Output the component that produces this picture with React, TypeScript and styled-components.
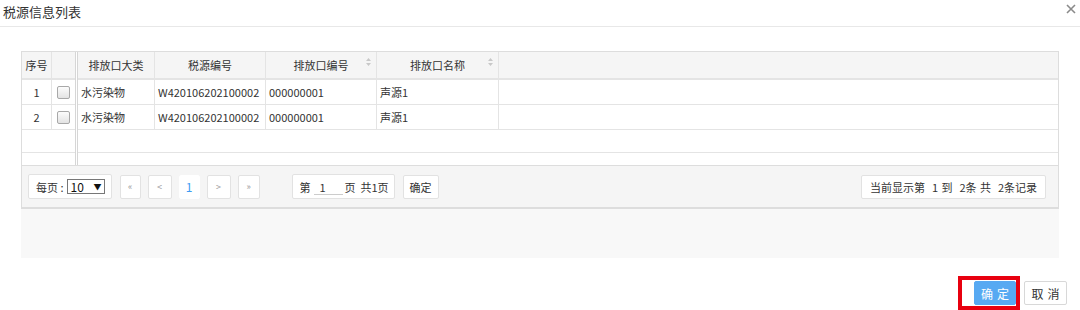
import styled, { createGlobalStyle } from 'styled-components'

const GlobalStyle = createGlobalStyle`
  body {
    margin: 0;
    background: #fff;
    font-family: "Noto Sans CJK SC", "Noto Sans", sans-serif;
    font-size: 11px;
    color: #333;
  }
`

const Dialog = styled.div`
  width: 1080px;
  height: 310px;
  position: relative;
  overflow: hidden;
`

const TitleBar = styled.div`
  height: 27px;
  border-bottom: 1px solid #e8e8e8;
  display: flex;
  align-items: center;
  justify-content: space-between;
  padding: 0 4px 3px 3px;
  box-sizing: border-box;
`

const Title = styled.div`
  font-size: 13px;
  color: #333;
`

const CloseBtn = styled.svg`
  width: 10px;
  height: 10px;
  margin-top: -6px;
  cursor: pointer;
`

const Content = styled.div`
  padding: 24px 21px 0;
`

const GridBox = styled.div`
  border: 1px solid #ddd;
  border-bottom: 2px solid #ddd;
  background: #fff;
`

const GridBody = styled.div`
  display: flex;
  height: 113px;
`

const Pane = styled.div<{ $frozen?: boolean }>`
  display: flex;
  flex-direction: column;
  ${p => (p.$frozen ? 'width: 53px; border-right: 3px double #d6d6d6;' : 'flex: 1;')}
`

const HeadRow = styled.div`
  display: flex;
  height: 26px;
  background: #f5f5f5;
  border-bottom: 2px solid #e4e4e4;
`

const Row = styled.div<{ $empty?: boolean }>`
  display: flex;
  height: ${p => (p.$empty ? 22 : 24)}px;
  border-bottom: 1px solid #e4e4e4;
`

const Cell = styled.div<{ $w?: number; $center?: boolean; $last?: boolean }>`
  ${p => (p.$w ? `width: ${p.$w}px;` : 'flex: 1;')}
  flex-shrink: 0;
  box-sizing: border-box;
  border-right: ${p => (p.$last ? 'none' : '1px solid #e4e4e4')};
  display: flex;
  align-items: center;
  justify-content: ${p => (p.$center ? 'center' : 'flex-start')};
  padding: 0 3px;
  white-space: nowrap;
  overflow: hidden;
  position: relative;
`

const SortIcon = styled.svg`
  position: absolute;
  right: 5px;
  top: 6px;
  width: 5px;
  height: 8px;
`

const CheckBox = styled.span`
  width: 11px;
  height: 11px;
  border: 1px solid #a8a8a8;
  border-radius: 2px;
  background: linear-gradient(#fcfcfc, #e3e3e3);
`

const Pager = styled.div`
  height: 41px;
  border-top: 1px solid #ddd;
  background: #f5f5f5;
  display: flex;
  align-items: center;
  padding: 0 12px 0 6px;
`

const PagerBox = styled.div`
  height: 25px;
  box-sizing: border-box;
  background: #fff;
  border: 1px solid #e2e2e2;
  border-radius: 2px;
  display: flex;
  align-items: center;
  padding: 0 6px 0 7px;
  color: #333;
  white-space: nowrap;
`

const SizeSelect = styled.div`
  width: 38px;
  height: 15px;
  box-sizing: border-box;
  border: 1px solid #777;
  display: flex;
  align-items: center;
  justify-content: space-between;
  padding: 0 2px 0 3px;
  font-size: 12px;
  color: #111;
  margin-left: 3px;
`

const NavGroup = styled.div`
  display: flex;
  gap: 7px;
  margin-left: 8px;
`

const NavBtn = styled.div<{ $active?: boolean; $w?: number }>`
  width: ${p => p.$w || 22}px;
  height: 24px;
  box-sizing: border-box;
  background: #fff;
  border: 1px solid ${p => (p.$active ? '#fff' : '#e2e2e2')};
  border-radius: 2px;
  display: flex;
  align-items: center;
  justify-content: center;
  color: ${p => (p.$active ? '#3d9bf2' : '#999')};
  font-size: ${p => (p.$active ? 12 : 9)}px;
`

const GotoBox = styled(PagerBox)`
  margin-left: 32px;
  padding: 0 5px 0 7px;
`

const PageInput = styled.span`
  display: inline-block;
  width: 29px;
  border-bottom: 1px solid #ccc;
  margin: 3px 2px 0 3px;
  padding-left: 6px;
  box-sizing: border-box;
  line-height: 13px;
`

const SmallBtn = styled(PagerBox)`
  margin-left: 8px;
  padding: 0 6px;
  height: 24px;
  font-size: 11px;
`

const InfoBox = styled(PagerBox)`
  margin-left: auto;
  padding: 0 8px;
  height: 24px;
  word-spacing: 1px;
`

const GrayArea = styled.div`
  height: 49px;
  background: #f8f8f8;
`

const Footer = styled.div`
  display: flex;
  justify-content: flex-end;
  align-items: center;
  padding: 18px 13px 0 0;
`

const Highlight = styled.div`
  border: 4px solid #e8000f;
  padding: 1px 0 1px 12px;
  display: flex;
`

const Button = styled.div<{ $primary?: boolean }>`
  height: 24px;
  width: ${p => (p.$primary ? 42 : 43)}px;
  box-sizing: border-box;
  display: flex;
  align-items: center;
  justify-content: center;
  letter-spacing: 4px;
  padding-left: 4px;
  font-size: 12px;
  border-radius: 2px;
  background: ${p => (p.$primary ? '#57a9f2' : '#fff')};
  color: ${p => (p.$primary ? '#fff' : '#333')};
  border: 1px solid ${p => (p.$primary ? '#57a9f2' : '#d8d8d8')};
  margin-left: ${p => (p.$primary ? 0 : 4)}px;
`

const columns = [
  { title: '排放口大类', w: 77, key: 'type' },
  { title: '税源编号', w: 111, key: 'code' },
  { title: '排放口编号', w: 111, key: 'outlet', sort: true },
  { title: '排放口名称', w: 122, key: 'name', sort: true },
]

const rows = [
  { type: '水污染物', code: 'W420106202100002', outlet: '000000001', name: '声源1' },
  { type: '水污染物', code: 'W420106202100002', outlet: '000000001', name: '声源1' },
]

const Sort = () => (
  <SortIcon viewBox="0 0 5 8">
    <path d="M2.5 0 L5 3 L0 3 Z M2.5 8 L5 5 L0 5 Z" fill="#c8c8c8" />
  </SortIcon>
)

export default function App() {
  return (
    <Dialog>
      <GlobalStyle />
      <TitleBar>
        <Title>税源信息列表</Title>
        <CloseBtn viewBox="0 0 10 10">
          <path d="M1 1 L9 9 M9 1 L1 9" stroke="#8a8a8a" strokeWidth="1.6" />
        </CloseBtn>
      </TitleBar>
      <Content>
        <GridBox>
          <GridBody>
            <Pane $frozen>
              <HeadRow>
                <Cell $w={30} $center>序号</Cell>
                <Cell $w={23} $last />
              </HeadRow>
              {rows.map((_, i) => (
                <Row key={i}>
                  <Cell $w={30} $center>{i + 1}</Cell>
                  <Cell $w={23} $center $last><CheckBox /></Cell>
                </Row>
              ))}
              <Row $empty />
            </Pane>
            <Pane>
              <HeadRow>
                {columns.map(c => (
                  <Cell key={c.key} $w={c.w} $center>
                    {c.title}
                    {c.sort && <Sort />}
                  </Cell>
                ))}
                <Cell $last />
              </HeadRow>
              {rows.map((r, i) => (
                <Row key={i}>
                  {columns.map(c => (
                    <Cell key={c.key} $w={c.w}>{r[c.key as keyof typeof r]}</Cell>
                  ))}
                  <Cell $last />
                </Row>
              ))}
              <Row $empty />
            </Pane>
          </GridBody>
          <Pager>
            <PagerBox>
              每页 :
              <SizeSelect>
                <span>10</span>
                <span style={{ fontSize: 8 }}>▼</span>
              </SizeSelect>
            </PagerBox>
            <NavGroup>
              <NavBtn $w={21}>«</NavBtn>
              <NavBtn $w={24}>&lt;</NavBtn>
              <NavBtn $w={21} $active>1</NavBtn>
              <NavBtn $w={24}>&gt;</NavBtn>
              <NavBtn $w={22}>»</NavBtn>
            </NavGroup>
            <GotoBox>
              第<PageInput>1</PageInput>页&nbsp;&nbsp;共1页
            </GotoBox>
            <SmallBtn>确定</SmallBtn>
            <InfoBox>当前显示第&nbsp; 1 到&nbsp; 2条 共&nbsp; 2条记录</InfoBox>
          </Pager>
        </GridBox>
        <GrayArea />
      </Content>
      <Footer>
        <Highlight>
          <Button $primary>确定</Button>
        </Highlight>
        <Button>取消</Button>
      </Footer>
    </Dialog>
  )
}
